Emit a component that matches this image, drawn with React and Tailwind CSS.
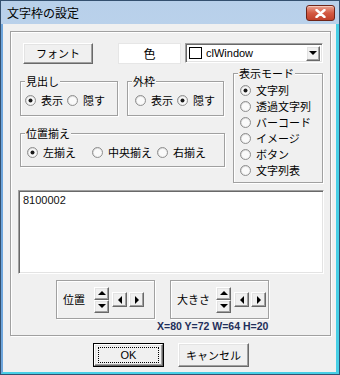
import React from "react";

const JP = "font-['Noto_Sans_CJK_JP','Noto_Sans',sans-serif]";
const LAT = "font-['Liberation_Sans',Arial,sans-serif]";

const raised =
  "border border-t-white border-l-white border-r-[#696969] border-b-[#696969] shadow-[inset_-1px_-1px_0_#a0a0a0,inset_1px_1px_0_#e3e3e3] bg-[#f0f0f0]";
const sunken =
  "border border-t-[#a0a0a0] border-l-[#a0a0a0] border-r-white border-b-white shadow-[inset_1px_1px_0_#696969,inset_-1px_-1px_0_#e3e3e3]";
const etched =
  "border border-[#a0a0a0] shadow-[inset_1px_1px_0_#fff,1px_1px_0_#fff]";

function Radio({ checked, label, className = "" }) {
  return (
    <div className={"flex items-center h-[16px] " + className}>
      <svg width="11" height="11" viewBox="0 0 11 11" className="shrink-0">
        <defs>
          <linearGradient id="rg" x1="0" y1="0" x2="1" y2="1">
            <stop offset="0" stopColor="#d0d0d0" />
            <stop offset="1" stopColor="#ffffff" />
          </linearGradient>
        </defs>
        <circle cx="5.5" cy="5.5" r="5" fill="url(#rg)" stroke="#8f8f8f" strokeWidth="1" />
        <circle cx="5.5" cy="5.5" r="3.6" fill="#fafafa" />
        {checked && <circle cx="5.5" cy="5.5" r="2" fill="#1a1a1a" />}
      </svg>
      <span className="ml-[5px] whitespace-nowrap">{label}</span>
    </div>
  );
}

function Group({ label, className = "", children }) {
  return (
    <div className={"relative " + etched + " " + className}>
      <span className="absolute top-[-7px] left-[4px] bg-[#f0f0f0] px-[1px] leading-[13px] whitespace-nowrap">
        {label}
      </span>
      {children}
    </div>
  );
}

function Tri({ dir }) {
  const pts = {
    up: "0,4 4,0 8,4",
    down: "0,0 8,0 4,4",
    left: "4,0 4,8 0,4",
    right: "0,0 0,8 4,4",
  }[dir];
  const vert = dir === "up" || dir === "down";
  return (
    <svg width={vert ? 8 : 4} height={vert ? 4 : 8} viewBox={vert ? "0 0 8 4" : "0 0 4 8"}>
      <polygon points={pts} fill="#000" />
    </svg>
  );
}

function Spinner({ label, labelW, gap }) {
  return (
    <div className={"flex items-center w-[99px] h-[39px] " + etched}>
      <span className={"ml-[6px] whitespace-nowrap " + labelW}>{label}</span>
      <div className={"flex flex-col " + gap}>
        <div className={"w-[15px] h-[13px] flex items-center justify-center " + raised}>
          <Tri dir="up" />
        </div>
        <div className={"w-[15px] h-[13px] flex items-center justify-center " + raised}>
          <Tri dir="down" />
        </div>
      </div>
      <div className={"ml-[3px] w-[15px] h-[15px] flex items-center justify-center " + raised}>
        <Tri dir="left" />
      </div>
      <div className={"ml-[2px] w-[15px] h-[15px] flex items-center justify-center " + raised}>
        <Tri dir="right" />
      </div>
    </div>
  );
}

export default function App() {
  return (
    <div className={"w-[340px] h-[375px] flex flex-col border border-[#34506f] bg-gradient-to-b from-[#b8d0ea] to-[#d3e3f4] text-[11px] text-black " + JP}>
      {/* Title bar */}
      <div className="h-[23px] flex items-start shrink-0">
        <span className="ml-[6px] mt-[5px] text-[12px] leading-[14px]">文字枠の設定</span>
        <div className="ml-auto mr-[4px] mt-[4px] w-[29px] h-[16px] rounded-[3px] border border-[#6e2418] bg-gradient-to-b from-[#e9a08f] via-[#d45a43] to-[#c0402a] flex items-center justify-center shadow-[inset_0_1px_0_#f6c6b8]">
          <svg width="11" height="9" viewBox="0 0 11 9">
            <path d="M1.5 1 L9.5 8 M9.5 1 L1.5 8" stroke="#fff" strokeWidth="2.4" strokeLinecap="round" />
          </svg>
        </div>
      </div>

      {/* Client */}
      <div className="flex-1 flex flex-col bg-[#f0f0f0] border-l-2 border-l-[#6fa6dc] border-r-[3px] border-r-[#47cfe6] border-b-2 border-b-[#47cfe6]">
        {/* Big frame */}
        <div className={"mt-[7px] ml-[7px] w-[321px] h-[305px] flex flex-col " + etched}>
          {/* Row 1 */}
          <div className="mt-[11px] flex items-start">
            <div className={"ml-[12px] w-[70px] h-[21px] flex items-center justify-center " + raised}>
              フォント
            </div>
            <div className="ml-[25px] w-[63px] h-[21px] bg-white border border-[#e6e6e6] flex items-center justify-center text-[12px]">
              色
            </div>
            <div className={"ml-[4px] w-[138px] h-[20px] bg-white flex items-center " + sunken}>
              <div className="ml-[3px] w-[13px] h-[12px] border border-black bg-white" />
              <span className={"ml-[4px] text-[11px] " + LAT}>clWindow</span>
              <div className={"ml-auto mr-[2px] w-[14px] h-[15px] flex items-center justify-center " + raised}>
                <Tri dir="down" />
              </div>
            </div>
          </div>

          {/* Row 2 */}
          <div className="mt-[9px] flex items-start">
            <div className="ml-[9px] w-[205px] flex flex-col">
              <div className="mt-[8px] flex">
                <Group label="見出し" className="w-[98px] h-[35px] flex items-center pt-[4px]">
                  <Radio checked label="表示" className="ml-[4px]" />
                  <Radio label="隠す" className="ml-[4px]" />
                </Group>
                <Group label="外枠" className="ml-[9px] w-[97px] h-[35px] flex items-center pt-[4px]">
                  <Radio label="表示" className="ml-[7px]" />
                  <Radio checked label="隠す" className="ml-[4px]" />
                </Group>
              </div>
              <Group label="位置揃え" className="mt-[17px] w-[205px] h-[34px] flex items-center pt-[5px]">
                <Radio checked label="左揃え" className="ml-[6px]" />
                <Radio label="中央揃え" className="ml-[16px]" />
                <Radio label="右揃え" className="ml-[5px]" />
              </Group>
            </div>
            <Group label="表示モード" className="ml-[8px] w-[90px] h-[110px] flex flex-col pt-[8px] pl-[6px]">
              <Radio checked label="文字列" />
              <Radio label="透過文字列" />
              <Radio label="バーコード" />
              <Radio label="イメージ" />
              <Radio label="ボタン" />
              <Radio label="文字列表" />
            </Group>
          </div>

          {/* Textarea */}
          <div className={"mt-[7px] ml-[7px] w-[306px] h-[84px] bg-white " + sunken}>
            <div className={"ml-[4px] mt-[3px] text-[11px] leading-[13px] text-[#111] " + LAT}>8100002</div>
          </div>

          {/* Spinners */}
          <div className="mt-[6px] flex">
            <div className="ml-[45px]">
              <Spinner label="位置" labelW="w-[22px]" gap="ml-[9px]" />
            </div>
            <div className="ml-[15px]">
              <Spinner label="大きさ" labelW="w-[33px]" gap="ml-[6px]" />
            </div>
          </div>
          <div className={"mt-[1px] ml-[146px] text-[10.5px] leading-[12px] font-bold text-[#1f2f5a] whitespace-nowrap " + LAT}>
            X=80 Y=72 W=64 H=20
          </div>
        </div>

        {/* Buttons */}
        <div className="mt-[7px] flex">
          <div className="ml-[90px] w-[71px] h-[24px] border border-black flex">
            <div className={"flex-1 flex items-center justify-center " + raised}>
              <div className={"w-[61px] h-[16px] border border-dotted border-black flex items-center justify-center text-[11px] " + LAT}>
                OK
              </div>
            </div>
          </div>
          <div className={"ml-[14px] w-[71px] h-[24px] flex items-center justify-center " + raised}>
            キャンセル
          </div>
        </div>
      </div>
    </div>
  );
}
